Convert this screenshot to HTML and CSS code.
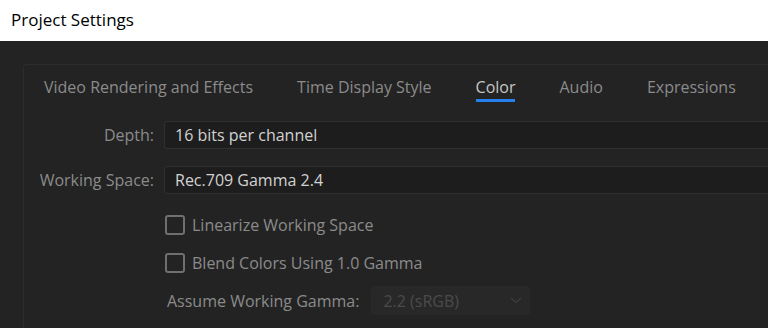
FILE: index.html
```html
<!DOCTYPE html>
<html>
  <head>
    <meta charset="utf-8" />
    <title>Project Settings</title>
    <link rel="stylesheet" href="styles.css">
  </head>
  <body>
    <header class="titlebar">Project Settings</header>
    <main class="dialog">
      <section class="panel">
        <nav class="tabs">
          <a class="tab">Video Rendering and Effects</a>
          <a class="tab">Time Display Style</a>
          <a class="tab active">Color</a>
          <a class="tab">Audio</a>
          <a class="tab">Expressions</a>
        </nav>
        <div class="form">
          <div class="row">
            <label class="label">Depth:</label>
            <div class="field">16 bits per channel</div>
          </div>
          <div class="row">
            <label class="label">Working Space:</label>
            <div class="field">Rec.709 Gamma 2.4</div>
          </div>
          <div class="checks">
            <label class="check"><span class="box"></span>Linearize Working Space</label>
            <label class="check"><span class="box"></span>Blend Colors Using 1.0 Gamma</label>
            <div class="gamma">
              <span class="gamma-label">Assume Working Gamma:</span>
              <div class="select disabled">
                <span>2.2 (sRGB)</span>
                <svg class="chevron" width="12" height="7" viewBox="0 0 12 7">
                  <path d="M1 1 L6 5.5 L11 1" fill="none" stroke="#3e3e3e" stroke-width="1.2"/>
                </svg>
              </div>
            </div>
          </div>
        </div>
      </section>
    </main>
  </body>
</html>
```

FILE: styles.css
```css
html { font-family: "Open Sans", sans-serif; }

body {
  margin: 0;
  background: #232323;
  overflow: hidden;
  height: 328px;
}

.titlebar {
  background: #fff;
  color: #000;
  height: 41px;
  line-height: 40px;
  padding-left: 11px;
  font-size: 17px;
  box-sizing: border-box;
}

.dialog {
  padding: 23px 0 0 23px;
}

.panel {
  border: 1px solid #2d2d2d;
  border-right: none;
  border-bottom: none;
  border-radius: 4px 0 0 0;
  height: 264px;
  box-sizing: border-box;
}

.tabs {
  display: flex;
  gap: 44px;
  padding: 10px 0 0 20px;
}
.tab {
  color: #8b8b8b;
  font-size: 16px;
  line-height: 24px;
  padding-bottom: 3px;
}
.tab.active {
  color: #c6c6c6;
  box-shadow: inset 0 -3px 0 #2680eb;
}

.form {
  padding-top: 19px;
}

.row {
  display: flex;
  align-items: center;
  margin-bottom: 17px;
}
.label {
  width: 130px;
  text-align: right;
  color: #8b8b8b;
  font-size: 16px;
}
.field {
  flex: 1;
  margin-left: 10px;
  height: 28px;
  box-sizing: border-box;
  background: #1d1d1d;
  border: 1px solid #303030;
  border-right: none;
  border-radius: 3px 0 0 3px;
  padding-left: 10px;
  line-height: 26px;
  color: #d2d2d2;
  font-size: 16px;
}

.checks {
  padding: 4px 0 0 141px;
  display: flex;
  flex-direction: column;
  gap: 18px;
}
.check {
  display: flex;
  align-items: center;
  height: 20px;
  color: #8b8b8b;
  font-size: 16px;
}
.box {
  width: 20px;
  height: 20px;
  box-sizing: border-box;
  border: 2px solid #6f6f6f;
  border-radius: 3px;
  margin-right: 7px;
}

.gamma {
  display: flex;
  align-items: center;
  margin-top: -5px;
  padding-left: 2px;
}
.gamma-label {
  color: #8b8b8b;
  font-size: 16px;
}
.select {
  margin-left: 12px;
  width: 159px;
  height: 29px;
  box-sizing: border-box;
  background: #282828;
  border-radius: 3px;
  display: flex;
  align-items: center;
  justify-content: space-between;
  padding: 0 8px 0 12px;
  font-size: 16px;
}
.select.disabled {
  color: #4b4b4b;
}
```
